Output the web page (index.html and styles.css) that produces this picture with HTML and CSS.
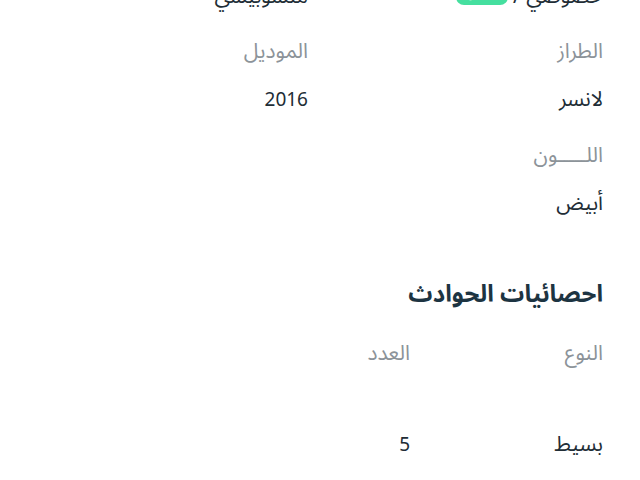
FILE: index.html
```html
<!DOCTYPE html>
<html lang="ar" dir="rtl">
<head>
<meta charset="utf-8">
<link rel="stylesheet" href="styles.css">
</head>
<body>
<main class="page">
  <section class="grid">
    <div class="field">
      <div class="value first">خصوصي / <span class="pill">خاص</span></div>
    </div>
    <div class="field">
      <div class="value first">متسوبيشي</div>
    </div>
    <div class="field">
      <div class="label">الطراز</div>
      <div class="value">لانسر</div>
    </div>
    <div class="field">
      <div class="label">الموديل</div>
      <div class="value"><span class="num">2016</span></div>
    </div>
    <div class="field">
      <div class="label">اللـــــون</div>
      <div class="value">أبيض</div>
    </div>
    <div class="field"></div>
  </section>

  <h2 class="heading">احصائيات الحوادث</h2>

  <section class="stats">
    <div class="label">النوع</div>
    <div class="label">العدد</div>
    <div></div>
    <div class="value cell">بسيط</div>
    <div class="value cell"><span class="num">5</span></div>
    <div></div>
  </section>
</main>
</body>
</html>
```

FILE: styles.css
```css
html, body {
  margin: 0;
  padding: 0;
  background: #ffffff;
}
body {
  font-family: "Noto Sans Arabic", "Noto Sans", "Open Sans", "DejaVu Sans", sans-serif;
  direction: rtl;
  overflow: hidden;
}
.page {
  padding: 0 37px 0 13px;
  margin-top: -19px;
}
.grid {
  display: grid;
  grid-template-columns: 1fr 1fr;
  column-gap: 0;
  row-gap: 25px;
}
.field {
  display: flex;
  flex-direction: column;
}
.label {
  font-size: 21px;
  line-height: 30px;
  color: #8c9399;
}
.value {
  font-size: 21px;
  line-height: 30px;
  color: #212d36;
  margin-top: 18px;
}
.num {
  font-size: 19px;
}
.value.first {
  margin-top: 0;
}
.pill {
  display: inline-block;
  box-sizing: border-box;
  width: 52px;
  text-align: center;
  background: #45df9f;
  color: #ffffff;
  border-radius: 8px;
  line-height: 24px;
  font-size: 14px;
  vertical-align: 6px;
}
.heading {
  margin: 62px 0 0 0;
  font-size: 24px;
  line-height: 30px;
  font-weight: 700;
  color: #1d3442;
}
.stats {
  display: grid;
  grid-template-columns: 193px 193px 1fr;
  margin-top: 28px;
}
.stats .cell {
  margin-top: 61px;
}
```
